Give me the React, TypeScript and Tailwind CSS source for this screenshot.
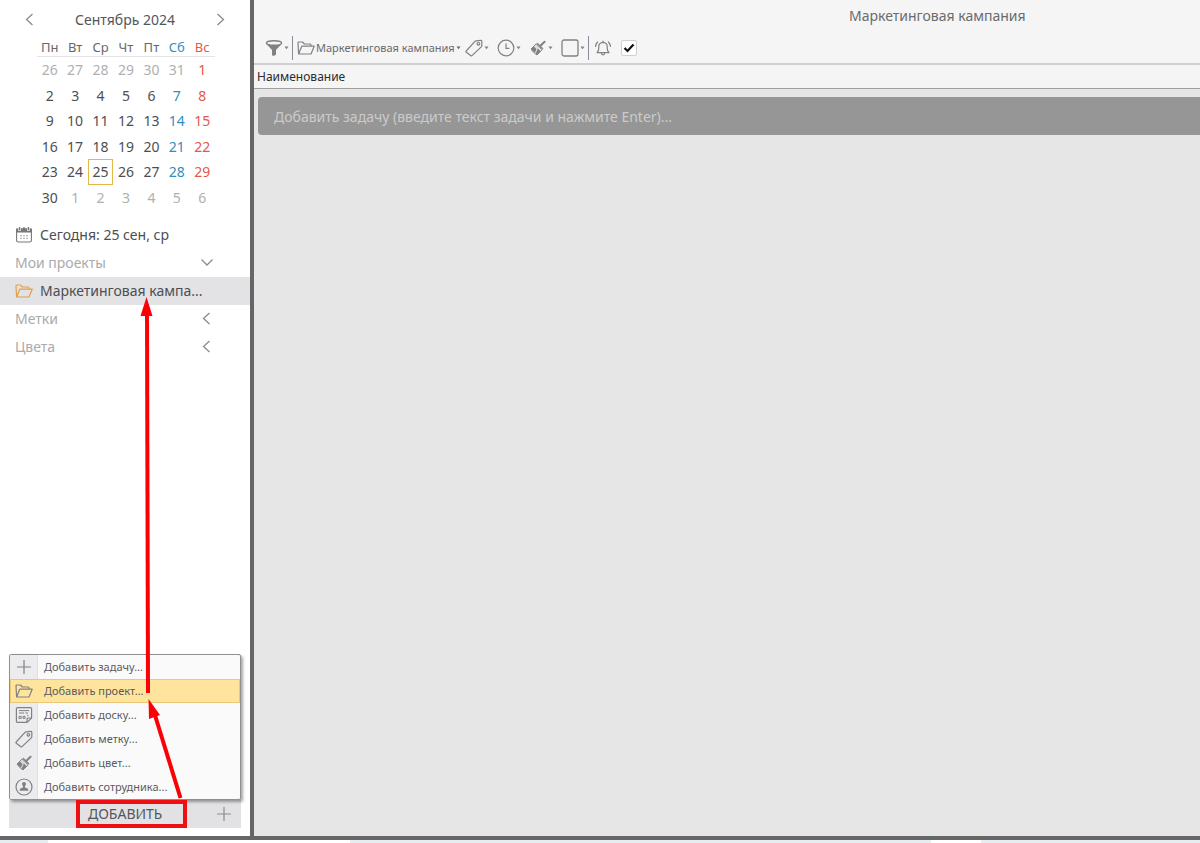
import { useState } from 'react'
import type { ReactNode } from 'react'

interface IconProps {
  className?: string
}

interface Day {
  day: number
  muted?: boolean
}

const weekDays = ['Пн', 'Вт', 'Ср', 'Чт', 'Пт', 'Сб', 'Вс']

// September 2024, starts with the tail of August
const weeks: Day[][] = Array.from({ length: 6 }, (_, week) =>
  Array.from({ length: 7 }, (_, i) => {
    const n = week * 7 + i - 5
    if (n < 1) return { day: n + 31, muted: true }
    if (n > 30) return { day: n - 30, muted: true }
    return { day: n }
  })
)

const dayColor = (index: number, muted?: boolean) => {
  if (muted) return 'text-[#b0b0b2]'
  if (index === 5) return 'text-[#2f8fc0]'
  if (index === 6) return 'text-[#e65848]'
  return 'text-[#4d4e52]'
}

const FolderIcon = ({ className }: IconProps) => (
  <svg className={className} viewBox="0 0 18 16" width="18" height="16" fill="none" stroke="currentColor" strokeWidth="1.2" strokeLinejoin="round">
    <path d="M1.6 14 L1 3 Q1 2 2 2 H5.5 L7.3 4 H13 Q14 4 14 5 V6" />
    <path d="M1.6 14 L4.8 6.2 H17.2 L14 14 Z" />
  </svg>
)

const TagIcon = ({ className }: IconProps) => (
  <svg className={className} viewBox="0 0 18 18" width="18" height="18" fill="none" stroke="currentColor" strokeWidth="1.2" strokeLinejoin="round">
    <path d="M1.2 12 L9.5 2.8 Q10.2 2 11.2 1.9 L15.6 1.3 Q16.7 1.2 16.8 2.3 L16.8 6.6 Q16.7 7.4 16 8.1 L7 16.6 Q6.3 17.2 5.6 16.5 L1.3 13.2 Q0.6 12.6 1.2 12 Z" />
    <circle cx="13.4" cy="4.8" r="1.3" />
  </svg>
)

const BrushIcon = ({ className }: IconProps) => (
  <svg className={className} viewBox="0 0 18 18" width="18" height="18" fill="none" stroke="currentColor">
    <path d="M11.4 6.8 L15.6 2.8" strokeWidth="2" strokeLinecap="round" />
    <path d="M8 4.2 L13.8 10" strokeWidth="1.6" />
    <path d="M7.2 4.8 L13.2 10.8 L8 16 Q4 13.6 2 10 Z" fill="currentColor" fillOpacity="0.2" strokeWidth="0.9" strokeLinejoin="round" />
    <path d="M4.8 7.4 L7.4 10 L6 13.8 Q3.4 12 2 10 Z" fill="currentColor" stroke="none" />
    <path d="M8.8 9.4 L11.8 12.4 L8 16 L6.6 15 Z" fill="currentColor" stroke="none" />
  </svg>
)

const PlusIcon = ({ className }: IconProps) => (
  <svg className={className} viewBox="0 0 18 18" width="18" height="18" fill="none" stroke="currentColor" strokeWidth="1.2">
    <path d="M9 2 V16 M2 9 H16" />
  </svg>
)

const BoardIcon = ({ className }: IconProps) => (
  <svg className={className} viewBox="0 0 18 18" width="18" height="18" fill="none" stroke="currentColor" strokeWidth="1.2">
    <path d="M2.5 1.6 H15.5 Q16.6 1.6 16.6 2.7 V12 L12 16.4 H2.5 Q1.4 16.4 1.4 15.3 V2.7 Q1.4 1.6 2.5 1.6 Z" />
    <path d="M16.4 12 H13 Q12 12 12 13 V16.2" />
    <path d="M4 4.6 H14 M4 7 H9 M10.4 7 H13" strokeWidth="1" />
    <path d="M4 10.4 H6.2 V12.4 H4 Z M8 10.4 H10 V12.4 H8 Z M12 9.6 H13.4" strokeWidth="1" />
  </svg>
)

const PersonIcon = ({ className }: IconProps) => (
  <svg className={className} viewBox="0 0 18 18" width="18" height="18" fill="none" stroke="currentColor" strokeWidth="1.2">
    <circle cx="9" cy="9" r="8" />
    <circle cx="9" cy="6" r="2" fill="currentColor" stroke="none" />
    <path d="M8 7 H10 V9.6 Q13.4 10.2 13.4 12.8 H4.6 Q4.6 10.2 8 9.6 Z" fill="currentColor" stroke="none" />
  </svg>
)

const FilterIcon = ({ className }: IconProps) => (
  <svg className={className} viewBox="0 0 18 18" width="18" height="18">
    <path d="M1 4.4 L7 11 V16.2 Q9 17.8 11 15.6 V11 L17 4.4 Z" fill="currentColor" />
    <ellipse cx="9" cy="4" rx="7.6" ry="2.3" fill="#f5f5f5" stroke="currentColor" strokeWidth="1.4" />
  </svg>
)

const ClockIcon = ({ className }: IconProps) => (
  <svg className={className} viewBox="0 0 18 18" width="18" height="18" fill="none" stroke="currentColor" strokeWidth="1.2">
    <circle cx="9" cy="9" r="7.8" />
    <path d="M9 4.4 V9.4 H12.4" />
  </svg>
)

const SquareIcon = ({ className }: IconProps) => (
  <svg className={className} viewBox="0 0 18 18" width="18" height="18" fill="none" stroke="currentColor" strokeWidth="1.3">
    <rect x="1" y="1" width="16" height="16" rx="2" />
  </svg>
)

const BellIcon = ({ className }: IconProps) => (
  <svg className={className} viewBox="0 0 18 18" width="18" height="18" fill="none" stroke="currentColor" strokeWidth="1.2" strokeLinecap="round" strokeLinejoin="round">
    <path d="M3 13.6 Q4.8 12 4.8 9 V7.4 Q4.8 3.8 9 3.4 Q13.2 3.8 13.2 7.4 V9 Q13.2 12 15 13.6 Z" />
    <path d="M9 3.2 V2 M7.4 14 Q7.6 16 9 16 Q10.4 16 10.6 14" />
    <path d="M3.6 3 Q1.8 4.8 1.6 7.4 M14.4 3 Q16.2 4.8 16.4 7.4" />
  </svg>
)

const CalendarIcon = ({ className }: IconProps) => (
  <svg className={className} viewBox="0 0 18 18" width="18" height="18" fill="none" stroke="currentColor" strokeWidth="1.1">
    <rect x="1.6" y="3" width="14.8" height="13" rx="1.6" />
    <path d="M1.6 3 H16.4 V6 H1.6 Z" fill="currentColor" />
    <path d="M4.6 1 V5 M13.4 1 V5" stroke="#fff" strokeWidth="2.6" />
    <path d="M4.6 1 V4.6 M13.4 1 V4.6 M9 1 V4" strokeWidth="1.4" />
    <path d="M5 9.6 H13 M5 12.4 H13" strokeDasharray="2 1" strokeOpacity="0.5" />
  </svg>
)

const Chevron = ({ direction }: { direction: 'left' | 'right' | 'down' }) => {
  const paths = {
    left: 'M9.5 1 L3.5 6.5 L9.5 12',
    right: 'M4.5 1 L10.5 6.5 L4.5 12',
    down: 'M1.5 3.5 L7 9 L12.5 3.5'
  }
  return (
    <svg viewBox="0 0 14 14" width="14" height="14" fill="none" stroke="#8b8b8e" strokeWidth="1.3">
      <path d={paths[direction]} />
    </svg>
  )
}

const Caret = () => (
  <svg viewBox="0 0 5 4" width="5" height="4" fill="currentColor">
    <path d="M0.5 0.5 H4.5 L2.5 3.2 Z" />
  </svg>
)

const menuItems: { label: string; icon: ReactNode }[] = [
  { label: 'Добавить задачу...', icon: <PlusIcon /> },
  { label: 'Добавить проект...', icon: <FolderIcon /> },
  { label: 'Добавить доску...', icon: <BoardIcon /> },
  { label: 'Добавить метку...', icon: <TagIcon /> },
  { label: 'Добавить цвет...', icon: <BrushIcon /> },
  { label: 'Добавить сотрудника...', icon: <PersonIcon /> }
]

const MonthCalendar = () => (
  <div className="px-[23px] pt-[9px]">
    <div className="flex h-[22px] items-center justify-between">
      <button aria-label="Предыдущий месяц"><Chevron direction="left" /></button>
      <h2 className="text-sm text-[#55565a]">Сентябрь 2024</h2>
      <button aria-label="Следующий месяц"><Chevron direction="right" /></button>
    </div>
    <table className="mt-1.5 ml-[14px] w-[178px] table-fixed border-separate border-spacing-0 text-center text-sm leading-5">
      <thead>
        <tr className="h-5">
          {weekDays.map((name, i) => (
            <th key={name} className={`border-b border-[#e4e4e6] p-0 text-[13px] leading-4 font-normal ${i < 5 ? 'text-[#66676b]' : dayColor(i)}`}>
              {name}
            </th>
          ))}
        </tr>
      </thead>
      <tbody>
        {weeks.map((week, row) => (
          <tr key={row} className={row % 2 ? 'h-[25px]' : 'h-[26px]'}>
            {week.map(({ day, muted }, i) => (
              <td
                key={i}
                className={`p-0 ${dayColor(i, muted)} ${day === 25 && !muted ? 'border border-[#e3b94a]' : ''}`}
              >
                {day}
              </td>
            ))}
          </tr>
        ))}
      </tbody>
    </table>
  </div>
)

const SectionHeader = ({ title, open }: { title: string; open?: boolean }) => (
  <button className="flex h-7 w-full items-center justify-between pr-9 pl-[15px] text-sm text-[#aaaaac]">
    {title}
    <Chevron direction={open ? 'down' : 'left'} />
  </button>
)

const Sidebar = () => (
  <aside className="relative flex w-[250px] shrink-0 flex-col bg-white">
    <MonthCalendar />
    <nav className="mt-[11px] text-sm text-[#4d4e52]">
      <a href="#today" className="flex h-7 items-center gap-[7px] pl-[15px]">
        <CalendarIcon className="text-[#77787a]" />
        Сегодня: 25 сен, ср
      </a>
      <SectionHeader title="Мои проекты" open />
      <a href="#project" className="flex h-7 items-center gap-[7px] bg-[#e3e3e5] pl-[15px]">
        <FolderIcon className="text-[#dfa04a]" />
        Маркетинговая кампа...
      </a>
      <SectionHeader title="Метки" />
      <SectionHeader title="Цвета" />
    </nav>

    <div className="relative mx-[9px] mt-auto mb-2">
      <ul className="absolute bottom-full left-0 w-full rounded-[2px] border border-[#909092] bg-[#fafafa] shadow-[2px_2px_3px_rgba(0,0,0,0.35)]">
        {menuItems.map((item, i) => (
          <li key={item.label}>
            <button
              className={`flex h-6 w-full items-center text-left text-[11px] text-[#5a5b5e] ${
                i === 1 ? 'bg-[#fee49c] outline outline-[#e9c878] -outline-offset-1' : ''
              }`}
            >
              <span
                className={`flex h-6 w-7 items-center justify-center border-r text-[#808184] ${
                  i === 1 ? 'border-transparent' : 'border-[#e0e0e2] bg-[#ececee]'
                }`}
              >
                {item.icon}
              </span>
              <span className="pl-[6px]">{item.label}</span>
            </button>
          </li>
        ))}
      </ul>
      <button className="flex h-7 w-full items-center bg-[#e2e2e4] pr-2 text-sm text-[#55565a]">
        <span className="relative ml-[67px] flex h-7 w-[111px] items-center border-4 border-[#ee0f12] pl-2">ДОБАВИТЬ</span>
        <PlusIcon className="ml-auto text-[#8b8b8e]" />
      </button>
    </div>

    {/* Pointers between the menu and the new project */}
    <svg className="pointer-events-none absolute bottom-[36px] left-[130px]" width="60" height="504" viewBox="0 0 60 504" fill="#fb0006" stroke="#fb0006">
      <path d="M18 397 L17 14" strokeWidth="4" />
      <path d="M16.5 1 L22.5 20 L10.5 20 Z" stroke="none" />
      <path d="M50.5 502 L24 416" strokeWidth="4" />
      <path d="M18.5 403 L30 419 L19 423 Z" stroke="none" />
    </svg>
  </aside>
)

const ToolButton = ({ label, children }: { label: string; children: ReactNode }) => (
  <button aria-label={label} className="flex items-center gap-px text-[#808184]">
    {children}
    <Caret />
  </button>
)

const Toolbar = () => {
  const [done, setDone] = useState(true)

  return (
    <div className="flex h-6 items-center pl-[11px]">
      <ToolButton label="Фильтр"><FilterIcon /></ToolButton>
      <div className="mr-1 ml-[3px] h-6 w-px bg-[#8b8b9c]" />
      <button className="flex items-center gap-px text-[#6a6b6e]">
        <FolderIcon className="text-[#808184]" />
        <span className="text-[11px]">Маркетинговая кампания</span>
        <Caret />
      </button>
      <div className="ml-1 flex items-center gap-2">
        <ToolButton label="Метка"><TagIcon /></ToolButton>
        <ToolButton label="Время"><ClockIcon /></ToolButton>
        <ToolButton label="Цвет"><BrushIcon /></ToolButton>
        <ToolButton label="Состояние"><SquareIcon /></ToolButton>
      </div>
      <div className="mr-[5px] ml-[3px] h-6 w-px bg-[#8b8b9c]" />
      <button aria-label="Напоминание" className="text-[#808184]"><BellIcon /></button>
      <label className="relative ml-2 flex h-[18px] w-[18px] items-center justify-center">
        <input
          type="checkbox"
          aria-label="Показывать завершённые"
          checked={done}
          onChange={(e) => setDone(e.target.checked)}
          className="h-4 w-4 appearance-none rounded-[2px] border border-[#d0d0d2] bg-white"
        />
        {done && (
          <svg className="pointer-events-none absolute" viewBox="0 0 12 10" width="12" height="10" fill="none" stroke="#111" strokeWidth="2.2">
            <path d="M1.5 5 L4.5 8 L10.5 1.5" />
          </svg>
        )}
      </label>
    </div>
  )
}

export default function App() {
  return (
    <div className="flex h-screen flex-col overflow-hidden font-['Noto_Sans',sans-serif]">
      <div className="flex min-h-0 flex-1">
        <Sidebar />
        <main className="min-w-0 flex-1 border-l-4 border-[#666667] bg-[#e6e6e6]">
          <header className="border-b-2 border-[#d0d0d0] bg-[#f5f5f5] pb-[3px]">
            <h1 className="h-9 pl-[595px] text-sm leading-8 whitespace-nowrap text-[#6a6b6e]">Маркетинговая кампания</h1>
            <Toolbar />
          </header>
          <div className="h-6 border-b border-[#a0a0a0] bg-[#f5f5f5] pl-[3px] text-xs leading-[23px] text-[#2b2c2e]">
            Наименование
          </div>
          <div className="pt-2 pl-1">
            <input
              type="text"
              aria-label="Новая задача"
              placeholder="Добавить задачу (введите текст задачи и нажмите Enter)..."
              className="h-[38px] w-full rounded-l bg-[#969696] pl-4 text-sm text-white outline-none placeholder:text-[#cbcbcb]"
            />
          </div>
        </main>
      </div>
      <footer className="flex h-[7px] border-t-4 border-[#666667] bg-[#e6edf1]">
        <div className="ml-12 w-[302px] bg-white" />
        <div className="ml-[581px] w-[50px] bg-white" />
      </footer>
    </div>
  )
}
